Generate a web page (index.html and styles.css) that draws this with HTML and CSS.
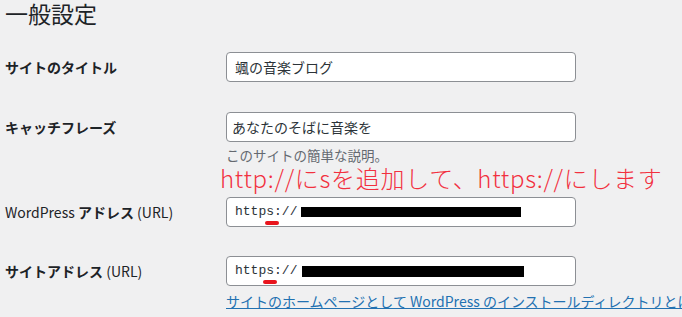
FILE: index.html
```html
<!DOCTYPE html>
<html lang="ja">
<head>
<meta charset="utf-8">
<title>一般設定</title>
<link rel="stylesheet" href="styles.css">
</head>
<body>
<div class="wrap">
  <h1 class="title">一般設定</h1>
  <div class="form">
    <div class="row row-first">
      <label class="label">サイトのタイトル</label>
      <div class="input"><span class="val">颯の音楽ブログ</span></div>
    </div>
    <div class="row row-second">
      <label class="label">キャッチフレーズ</label>
      <div class="input"><span class="val val-alt">あなたのそばに音楽を</span></div>
    </div>
    <div class="row">
      <div class="label"></div>
      <p class="desc">このサイトの簡単な説明。</p>
    </div>
    <div class="note">http://にsを追加して、https://にします</div>
    <div class="row">
      <label class="label"><span class="reg">WordPress</span> アドレス <span class="reg">(URL)</span></label>
      <div class="input input-url">
        <span class="mono">http<span class="mark">s</span>://</span>
        <span class="redact redact-a"></span>
      </div>
    </div>
    <div class="row row-fourth">
      <label class="label">サイトアドレス <span class="reg">(URL)</span></label>
      <div class="input input-url">
        <span class="mono">http<span class="mark mark-b">s</span>://</span>
        <span class="redact redact-b"></span>
      </div>
    </div>
    <div class="row">
      <div class="label"></div>
      <a class="link" href="#">サイトのホームページとして WordPress のインストールディレクトリとは異なる場所を設定する場合は、ここにアドレスを入力してください。</a>
    </div>
  </div>
</div>
</body>
</html>
```

FILE: styles.css
```css
html, body {
  margin: 0;
  padding: 0;
  background: #f0f0f1;
  overflow: hidden;
}
body {
  font-family: "Noto Sans CJK JP", "Noto Sans", sans-serif;
  color: #1d2327;
  width: 682px;
  height: 317px;
}
.wrap {
  padding-left: 5px;
}
.title {
  margin: 0;
  font-size: 23px;
  font-weight: 400;
  line-height: 26px;
  height: 26px;
  color: #1d2327;
}
.form {
  margin-top: 26px;
}
.row {
  display: grid;
  grid-template-columns: 221px 350px;
  align-items: center;
}
.row-second {
  margin-top: 30px;
}
.row-fourth {
  margin-top: 29px;
}
.label {
  font-size: 14px;
  font-weight: 700;
  line-height: 20px;
  color: #1d2327;
  white-space: nowrap;
}
.label .reg {
  font-weight: 400;
}
.input {
  box-sizing: border-box;
  height: 30px;
  background: #fff;
  border: 1px solid #8c8f94;
  border-radius: 4px;
  display: flex;
  align-items: center;
  padding-left: 8px;
  position: relative;
}
.val {
  font-size: 14px;
  color: #2c3338;
  line-height: 20px;
}
.val-alt {
  margin-left: -3px;
}
.desc {
  margin: 4px 0 0;
  font-size: 13.5px;
  line-height: 18px;
  color: #646970;
  white-space: nowrap;
}
.note {
  margin-left: 215px;
  margin-bottom: 5px;
  font-size: 24px;
  font-weight: 300;
  letter-spacing: 0.7px;
  line-height: 28px;
  color: #f2303f;
  white-space: nowrap;
}
.mono {
  font-family: "Liberation Mono", "DejaVu Sans Mono", monospace;
  font-size: 13px;
  color: #2c3338;
  line-height: 20px;
  position: relative;
}
.mark {
  position: relative;
}
.mark::after {
  content: "";
  position: absolute;
  left: -1px;
  right: -5px;
  top: 17px;
  height: 4px;
  border-radius: 2px;
  background: #e8141c;
}
.mark-b::after {
  left: -3px;
  right: -3px;
}
.redact {
  display: block;
  height: 10px;
  background: #000;
  margin-left: 4px;
}
.redact-a {
  width: 220px;
}
.redact-b {
  width: 222px;
  height: 11px;
  margin-left: 5px;
}
.link {
  margin-top: 4px;
  display: block;
  font-size: 14px;
  line-height: 22px;
  color: #2271b1;
  text-decoration: underline;
  white-space: nowrap;
}
```
